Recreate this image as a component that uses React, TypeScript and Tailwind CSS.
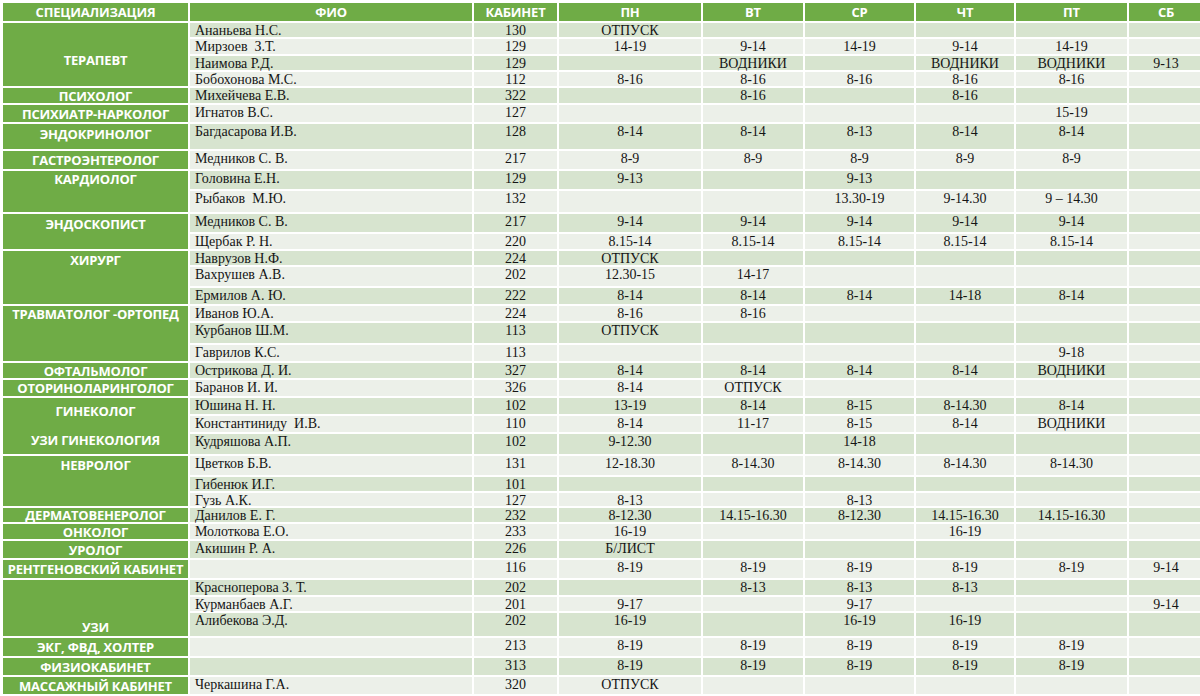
import React from "react";

type Row = { fio: string; cab: string; days: string[] };

type Group = {
  spec: React.ReactNode;
  span: string;
  align: string;
  rows: Row[];
};

const r = (fio: string, cab: string, ...days: string[]): Row => ({ fio, cab, days });

const groups: Group[] = [
  {
    spec: "ТЕРАПЕВТ",
    span: "row-span-4",
    align: "justify-center items-center pt-[10px]",
    rows: [
      r("Ананьева Н.С.", "130", "ОТПУСК"),
      r("Мирзоев  З.Т.", "129", "14-19", "9-14", "14-19", "9-14", "14-19"),
      r("Наимова Р.Д.", "129", "", "ВОДНИКИ", "", "ВОДНИКИ", "ВОДНИКИ", "9-13"),
      r("Бобохонова М.С.", "112", "8-16", "8-16", "8-16", "8-16", "8-16"),
    ],
  },
  { spec: "ПСИХОЛОГ", span: "row-span-1", align: "justify-center items-center", rows: [r("Михейчева Е.В.", "322", "", "8-16", "", "8-16")] },
  { spec: "ПСИХИАТР-НАРКОЛОГ", span: "row-span-1", align: "justify-center items-center", rows: [r("Игнатов В.С.", "127", "", "", "", "", "15-19")] },
  { spec: "ЭНДОКРИНОЛОГ", span: "row-span-1", align: "justify-center items-start pt-[3px]", rows: [r("Багдасарова И.В.", "128", "8-14", "8-14", "8-13", "8-14", "8-14")] },
  { spec: "ГАСТРОЭНТЕРОЛОГ", span: "row-span-1", align: "justify-center items-center", rows: [r("Медников С. В.", "217", "8-9", "8-9", "8-9", "8-9", "8-9")] },
  {
    spec: "КАРДИОЛОГ",
    span: "row-span-2",
    align: "justify-center items-start pt-[1px]",
    rows: [r("Головина Е.Н.", "129", "9-13", "", "9-13"), r("Рыбаков  М.Ю.", "132", "", "", "13.30-19", "9-14.30", "9 – 14.30")],
  },
  {
    spec: "ЭНДОСКОПИСТ",
    span: "row-span-2",
    align: "justify-center items-start pt-[3px]",
    rows: [
      r("Медников С. В.", "217", "9-14", "9-14", "9-14", "9-14", "9-14"),
      r("Щербак Р. Н.", "220", "8.15-14", "8.15-14", "8.15-14", "8.15-14", "8.15-14"),
    ],
  },
  {
    spec: "ХИРУРГ",
    span: "row-span-3",
    align: "justify-center items-start pt-[2px]",
    rows: [
      r("Наврузов Н.Ф.", "224", "ОТПУСК"),
      r("Вахрушев А.В.", "202", "12.30-15", "14-17"),
      r("Ермилов А. Ю.", "222", "8-14", "8-14", "8-14", "14-18", "8-14"),
    ],
  },
  {
    spec: "ТРАВМАТОЛОГ -ОРТОПЕД",
    span: "row-span-3",
    align: "justify-center items-start pt-[1px]",
    rows: [r("Иванов Ю.А.", "224", "8-16", "8-16"), r("Курбанов Ш.М.", "113", "ОТПУСК"), r("Гаврилов К.С.", "113", "", "", "", "", "9-18")],
  },
  { spec: "ОФТАЛЬМОЛОГ", span: "row-span-1", align: "justify-center items-center", rows: [r("Острикова Д. И.", "327", "8-14", "8-14", "8-14", "8-14", "ВОДНИКИ")] },
  { spec: "ОТОРИНОЛАРИНГОЛОГ", span: "row-span-1", align: "justify-center items-center", rows: [r("Баранов И. И.", "326", "8-14", "ОТПУСК")] },
  {
    spec: (
      <>
        <span>ГИНЕКОЛОГ</span>
        <span>УЗИ ГИНЕКОЛОГИЯ</span>
      </>
    ),
    span: "row-span-3",
    align: "flex-col items-center justify-between pt-[6px] pb-[7px]",
    rows: [
      r("Юшина Н. Н.", "102", "13-19", "8-14", "8-15", "8-14.30", "8-14"),
      r("Константиниду  И.В.", "110", "8-14", "11-17", "8-15", "8-14", "ВОДНИКИ"),
      r("Кудряшова А.П.", "102", "9-12.30", "", "14-18"),
    ],
  },
  {
    spec: "НЕВРОЛОГ",
    span: "row-span-3",
    align: "justify-center items-start pt-[2px]",
    rows: [
      r("Цветков Б.В.", "131", "12-18.30", "8-14.30", "8-14.30", "8-14.30", "8-14.30"),
      r("Гибенюк И.Г.", "101"),
      r("Гузь А.К.", "127", "8-13", "", "8-13"),
    ],
  },
  {
    spec: "ДЕРМАТОВЕНЕРОЛОГ",
    span: "row-span-1",
    align: "justify-center items-center",
    rows: [r("Данилов Е. Г.", "232", "8-12.30", "14.15-16.30", "8-12.30", "14.15-16.30", "14.15-16.30")],
  },
  { spec: "ОНКОЛОГ", span: "row-span-1", align: "justify-center items-center", rows: [r("Молоткова Е.О.", "233", "16-19", "", "", "16-19")] },
  { spec: "УРОЛОГ", span: "row-span-1", align: "justify-center items-center", rows: [r("Акишин Р. А.", "226", "Б/ЛИСТ")] },
  { spec: "РЕНТГЕНОВСКИЙ КАБИНЕТ", span: "row-span-1", align: "justify-center items-center", rows: [r("", "116", "8-19", "8-19", "8-19", "8-19", "8-19", "9-14")] },
  {
    spec: "УЗИ",
    span: "row-span-3",
    align: "justify-center items-end pb-[2px]",
    rows: [
      r("Красноперова З. Т.", "202", "", "8-13", "8-13", "8-13"),
      r("Курманбаев А.Г.", "201", "9-17", "", "9-17", "", "", "9-14"),
      r("Алибекова Э.Д.", "202", "16-19", "", "16-19", "16-19"),
    ],
  },
  { spec: "ЭКГ, ФВД, ХОЛТЕР", span: "row-span-1", align: "justify-center items-center", rows: [r("", "213", "8-19", "8-19", "8-19", "8-19", "8-19")] },
  { spec: "ФИЗИОКАБИНЕТ", span: "row-span-1", align: "justify-center items-center", rows: [r("", "313", "8-19", "8-19", "8-19", "8-19", "8-19")] },
  { spec: "МАССАЖНЫЙ КАБИНЕТ", span: "row-span-1", align: "justify-center items-center", rows: [r("Черкашина Г.А.", "320", "ОТПУСК")] },
];

const headers = ["СПЕЦИАЛИЗАЦИЯ", "ФИО", "КАБИНЕТ", "ПН", "ВТ", "СР", "ЧТ", "ПТ", "СБ", ""];

const green = "bg-[#6fac46] text-white font-bold font-['Open_Sans',sans-serif] text-[13px] leading-[14px]";

export default function App() {
  let idx = 0;
  return (
    <div className="w-[1200px] h-[696px] overflow-hidden bg-white pt-[3px] pl-[3px]">
      <div className="grid w-max gap-[2px] grid-cols-[185px_282px_83px_142px_100px_109px_98px_111px_74px_10px] grid-rows-[18px_14px_15px_14px_14px_15px_17px_25px_18px_18px_21px_18px_15px_14px_19px_16px_15px_20px_16px_15px_16px_16px_16px_20px_19px_14px_13px_14px_15px_17px_18px_15px_14px_23px_18px_17px_17px]">
        {headers.map((h, i) => (
          <div key={"h" + i} className={`${green} flex items-center justify-center tracking-[-0.2px]`}>
            {h}
          </div>
        ))}
        {groups.map((g, gi) => (
          <React.Fragment key={gi}>
            <div className={`${green} ${g.span} ${g.align} flex text-center tracking-[-0.2px] whitespace-nowrap`}>
              {g.spec}
            </div>
            {g.rows.map((row) => {
              const band = idx++ % 2 === 0 ? "bg-[#d7e4cf]" : "bg-[#ecf0e9]";
              const cell = `${band} font-['Liberation_Serif',serif] text-[14px] leading-[14px] pt-[1px] text-[#151515] whitespace-pre overflow-visible`;
              const days = [0, 1, 2, 3, 4, 5].map((k) => row.days[k] ?? "");
              return (
                <React.Fragment key={row.fio + row.cab + idx}>
                  <div className={`${cell} pl-[5px]`}>{row.fio}</div>
                  <div className={`${cell} text-center`}>{row.cab}</div>
                  {days.map((d, k) => (
                    <div key={k} className={`${cell} text-center`}>
                      {d}
                    </div>
                  ))}
                  <div className={cell} />
                </React.Fragment>
              );
            })}
          </React.Fragment>
        ))}
      </div>
    </div>
  );
}
